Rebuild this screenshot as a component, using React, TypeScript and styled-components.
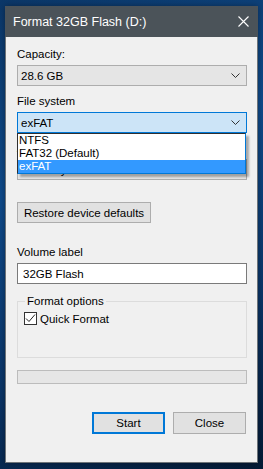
import styled, { createGlobalStyle } from 'styled-components';

const GlobalStyle = createGlobalStyle`
  html, body {
    margin: 0;
    padding: 0;
  }
  body {
    width: 263px;
    height: 469px;
    overflow: hidden;
    background: linear-gradient(160deg, #0b3768 0%, #0f4a8a 35%, #0a3466 70%, #041a35 100%);
    font-family: 'Liberation Sans', Arial, sans-serif;
  }
`;

const Desktop = styled.div`
  padding: 6px 5px 0 5px;
`;

const Window = styled.div`
  width: 253px;
  height: 457px;
  box-sizing: border-box;
  border: 1px solid #6d7378;
  border-top: none;
  background: #f0f0f0;
  display: flex;
  flex-direction: column;
  box-shadow: 0 0 6px rgba(0, 0, 0, 0.35);
`;

const TitleBar = styled.div`
  height: 31px;
  background: #4b5359;
  display: flex;
  align-items: center;
  justify-content: space-between;
  padding: 0 9px 0 8px;
  margin: 0 -1px;
  color: #ffffff;
  font-size: 12.5px;
`;

const CloseIcon = styled.svg`
  width: 11px;
  height: 11px;
`;

const Body = styled.div`
  flex: 1;
  padding: 10px 10px 0 11px;
  display: flex;
  flex-direction: column;
  font-size: 11.5px;
  color: #000;
`;

const Label = styled.div<{ $top?: number }>`
  line-height: 15px;
  margin-top: ${(p) => p.$top ?? 0}px;
  margin-bottom: 3px;
`;

const Field = styled.div`
  position: relative;
`;

const SelectBox = styled.div<{ $focused?: boolean }>`
  height: 21px;
  box-sizing: border-box;
  border: 1px solid ${(p) => (p.$focused ? '#0078d7' : '#adadad')};
  background: ${(p) => (p.$focused ? '#cce4f7' : '#e5e5e5')};
  display: flex;
  align-items: center;
  justify-content: space-between;
  padding: 0 6px 0 3px;
`;

const Chevron = styled.svg`
  width: 9px;
  height: 5px;
`;

const DropList = styled.div`
  position: absolute;
  top: 21px;
  left: 0;
  width: 229px;
  box-sizing: border-box;
  border: 1px solid #0078d7;
  border-left-color: #303030;
  border-top-color: #303030;
  background: #ffffff;
  box-shadow: 3px 3px 2px rgba(0, 0, 0, 0.3);
  z-index: 2;
`;

const Option = styled.div<{ $selected?: boolean }>`
  height: 13px;
  line-height: 13px;
  padding-left: 1px;
  background: ${(p) => (p.$selected ? '#3399ff' : 'transparent')};
  color: ${(p) => (p.$selected ? '#ffffff' : '#000000')};
`;

const Button = styled.button<{ $primary?: boolean }>`
  height: 21px;
  box-sizing: border-box;
  font-family: inherit;
  font-size: 11.5px;
  color: #000;
  background: #e1e1e1;
  border: ${(p) => (p.$primary ? '2px solid #0078d7' : '1px solid #adadad')};
  padding: 0;
`;

const RestoreButton = styled(Button)`
  width: 134px;
  margin-top: 22px;
`;

const TextInput = styled.div`
  height: 21px;
  box-sizing: border-box;
  border: 1px solid #7a7a7a;
  background: #ffffff;
  display: flex;
  align-items: center;
  padding-left: 5px;
`;

const GroupBox = styled.fieldset`
  margin: 10px 0 0 0;
  height: 64px;
  box-sizing: border-box;
  border: 1px solid #dcdcdc;
  padding: 0 6px;
  min-width: 0;
`;

const Legend = styled.legend`
  padding: 0 2px;
  margin-left: 1px;
  line-height: 14px;
`;

const CheckRow = styled.label`
  display: flex;
  align-items: center;
  gap: 3px;
  margin-top: 4px;
`;

const CheckBox = styled.span`
  width: 13px;
  height: 13px;
  box-sizing: border-box;
  border: 1px solid #333333;
  background: #ffffff;
  display: flex;
  align-items: center;
  justify-content: center;
`;

const Progress = styled.div`
  margin-top: 12px;
  height: 14px;
  box-sizing: border-box;
  border: 1px solid #bcbcbc;
  background: #e6e6e6;
`;

const Footer = styled.div`
  margin-top: 28px;
  display: flex;
  justify-content: flex-end;
  gap: 8px;
  padding-right: 1px;
`;

const FooterButton = styled(Button)`
  width: 73px;
  height: 22px;
`;

function DownChevron() {
  return (
    <Chevron viewBox="0 0 9 5">
      <path d="M0.5 0.5 L4.5 4.5 L8.5 0.5" fill="none" stroke="#333" strokeWidth="1" />
    </Chevron>
  );
}

export default function App() {
  return (
    <>
      <GlobalStyle />
      <Desktop>
        <Window>
          <TitleBar>
            <span>Format 32GB Flash (D:)</span>
            <CloseIcon viewBox="0 0 11 11">
              <path d="M0.5 0.5 L10.5 10.5 M10.5 0.5 L0.5 10.5" stroke="#ffffff" strokeWidth="1.1" />
            </CloseIcon>
          </TitleBar>
          <Body>
            <Label>Capacity:</Label>
            <SelectBox>
              <span>28.6 GB</span>
              <DownChevron />
            </SelectBox>

            <Label $top={8}>File system</Label>
            <Field>
              <SelectBox $focused>
                <span>exFAT</span>
                <DownChevron />
              </SelectBox>
              <DropList>
                <Option>NTFS</Option>
                <Option>FAT32 (Default)</Option>
                <Option $selected>exFAT</Option>
              </DropList>
            </Field>

            <Label $top={8}>Allocation unit size</Label>
            <SelectBox>
              <span>32 kilobytes</span>
              <DownChevron />
            </SelectBox>

            <RestoreButton>Restore device defaults</RestoreButton>

            <Label $top={22}>Volume label</Label>
            <TextInput>32GB Flash</TextInput>

            <GroupBox>
              <Legend>Format options</Legend>
              <CheckRow>
                <CheckBox>
                  <svg width="11" height="11" viewBox="0 0 11 11">
                    <path d="M1 5.5 L4 8.5 L10 1.5" fill="none" stroke="#222" strokeWidth="1" />
                  </svg>
                </CheckBox>
                Quick Format
              </CheckRow>
            </GroupBox>

            <Progress />

            <Footer>
              <FooterButton $primary>Start</FooterButton>
              <FooterButton>Close</FooterButton>
            </Footer>
          </Body>
        </Window>
      </Desktop>
    </>
  );
}
